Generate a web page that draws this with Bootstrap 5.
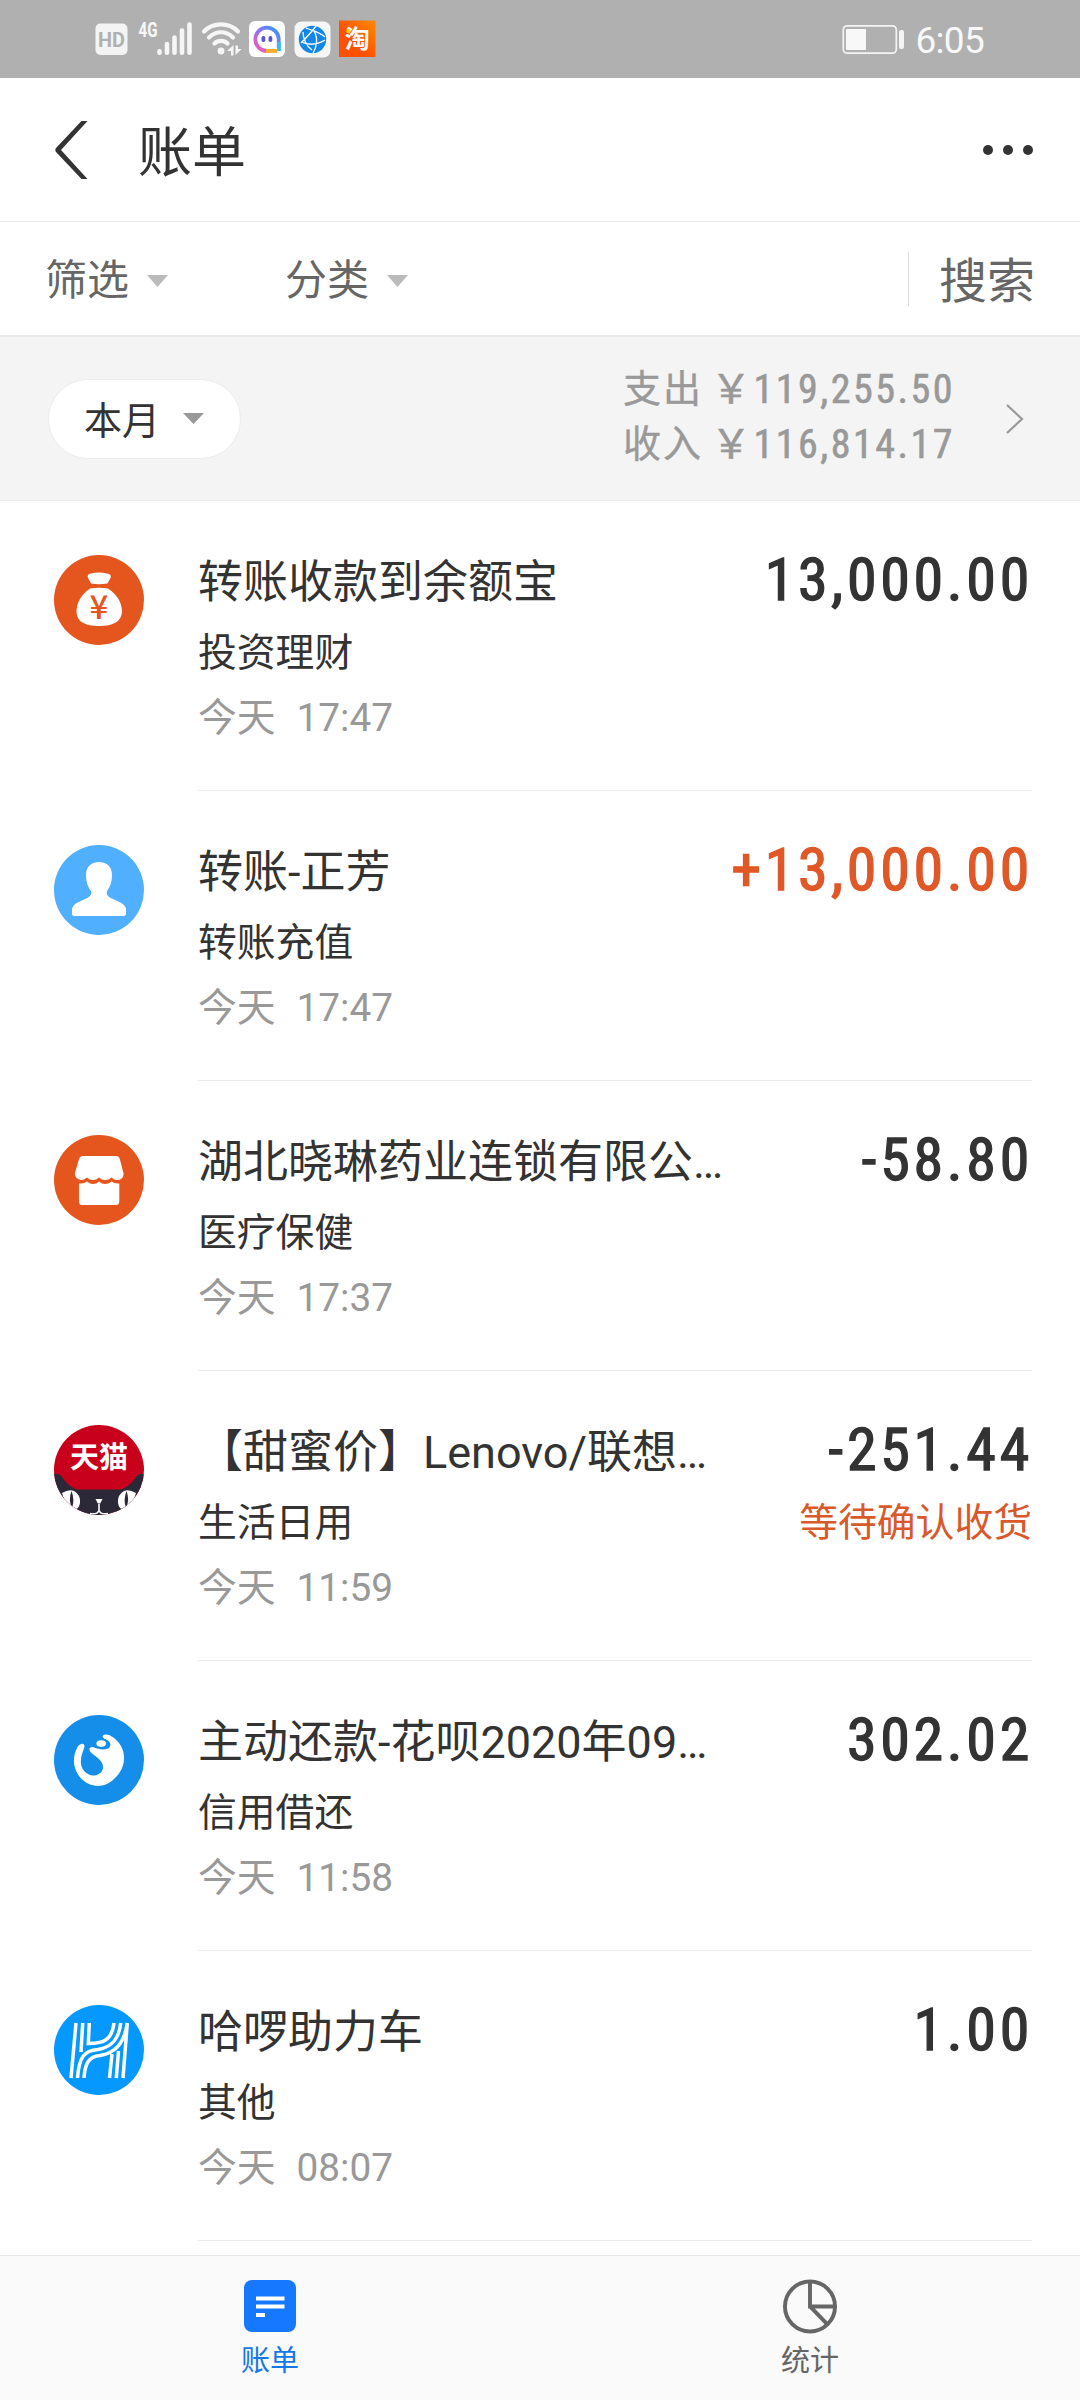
<!DOCTYPE html>
<html lang="zh-CN">
<head>
<meta charset="utf-8">
<meta name="viewport" content="width=device-width, initial-scale=1">
<title>账单</title>
<link href="https://cdn.jsdelivr.net/npm/bootstrap@5.3.0/dist/css/bootstrap.min.css" rel="stylesheet">
<style>
  body { width: 1080px; height: 2400px; overflow: hidden; background: #fff; color: #333; font-family: Roboto, "Noto Sans CJK SC", sans-serif; }
  svg { display: block; flex: none; }
  .statusbar { height: 78px; background: #b0b0b0; padding: 0 96px 0 95px; }
  .clock { font-size: 37px; line-height: 78px; color: #f8f8f8; letter-spacing: -.7px; margin-left: 11px; padding-top: 3px; }
  .titlebar { height: 144px; border-bottom: 1px solid #ebebeb; padding: 0 46px 0 53px; }
  .page-title { font-size: 54px; line-height: 60px; margin: 9px 0 0 49px; font-weight: 400; }
  .filterbar { height: 115px; border-bottom: 2px solid #eaeaea; padding: 0 45px 0 45px; color: #666; }
  .filter-item { font-size: 42px; line-height: 60px; width: 240px; padding-top: 5px; }
  .filter-item svg { margin: 0 0 1px 18px; }
  .search-link { font-size: 48px; line-height: 54px; border-left: 1px solid #ddd; padding-left: 30px; height: 54px; }
  .search-link span { display: block; padding-top: 3px; }
  .summary { height: 164px; background: #f4f4f4; border-bottom: 1px solid #ececec; padding: 0 56px 0 48px; }
  .month-pill { width: 193px; height: 80px; background: #fff; border: 1px solid #ececec; font-size: 38px; line-height: 78px; padding-left: 35px; }
  .month-pill span { padding-top: 4px; }
  .month-pill svg { margin-left: 23px; }
  .totals { color: #999; font-size: 38px; line-height: 55px; margin: -3px 51px 0 0; }
  .total-label { letter-spacing: 2px; width: 88px; -webkit-text-stroke: .4px; }
  .din { font-family: "Roboto Condensed", Roboto, "Noto Sans CJK SC", sans-serif; font-weight: 400; }
  .total-value { font-size: 40px; letter-spacing: 2.5px; -webkit-text-stroke: .6px; }
  .entry { height: 290px; padding: 54px 48px 0 54px; }
  .entry-body { margin-left: 54px; height: 236px; border-bottom: 1px solid #ebebeb; }
  .entry-title { font-size: 45px; line-height: 60px; margin-top: -2px; }
  .entry-kind { font-size: 38.8px; line-height: 60px; margin-top: 10px; }
  .entry-time { font-size: 38.8px; line-height: 60px; margin-top: 5px; color: #999; white-space: pre; word-spacing: .8px; }
  .amount { font-size: 60px; line-height: 60px; margin: -5px -1px 0 0; letter-spacing: 3.7px; -webkit-text-stroke: 1.3px; }
  .income { color: #e05827; }
  .pending { font-size: 38.8px; line-height: 60px; margin-top: 13px; color: #d9592b; }
  .tabs { height: 145px; margin-top: 14px; background: #fafafa; border-top: 1px solid #e8e8e8; padding-top: 23px; font-size: 29px; line-height: 40px; color: #666; }
  .tabs svg { margin-bottom: 8px; }
  .tabs .current { color: #1677e6; }
</style>
</head>
<body>
<div class="statusbar d-flex align-items-center">
  <svg width="282" height="78" viewBox="95 0 282 78">
    <rect x="95.5" y="23.500" width="32" height="31.500" rx="5" fill="#f4f4f4"/>
    <text x="111.500" y="46.500" font-size="20" font-weight="700" text-anchor="middle" fill="#b0b0b0" font-family="Roboto" textLength="27" lengthAdjust="spacingAndGlyphs">HD</text>
    <text x="138.500" y="37" font-size="20" font-weight="700" fill="#f8f8f8" font-family="Roboto" textLength="19" lengthAdjust="spacingAndGlyphs">4G</text>
    <g stroke="#f6f6f6" stroke-width="4.600" stroke-linecap="round"><path d="M159.500 51.300v1.400M167 44v8.700M174.500 37.500v15.200M182 30.500v22.200M189.500 24.500v28.200"/></g>
    <g fill="none" stroke="#f6f6f6" stroke-width="4.200" stroke-linecap="round"><path d="M204 31.500C213 22 229 22 238 31.500M209 37.500C216 30.500 226 30.500 233 37.500M214.500 43.500C218 40 224 40 227.500 43.500"/></g>
    <circle cx="221" cy="51" r="3.400" fill="#f6f6f6"/>
    <path fill="#f6f6f6" d="M227 51l6.500-6v10.500h-2.500v-4.500zM235.500 45.500v9.500l6-6h-3.500v-3.500z"/>
    <rect x="249" y="21" width="36" height="36" rx="6" fill="#fff"/>
    <defs>
      <linearGradient id="chat" x1="0" y1="1" x2="1" y2="0"><stop offset="0" stop-color="#ff5aa8"/><stop offset=".4" stop-color="#a46bf0"/><stop offset="1" stop-color="#2f9bf5"/></linearGradient>
      <linearGradient id="tb" x1="0" y1="1" x2="1" y2="0"><stop offset=".4" stop-color="#ff5000"/><stop offset="1" stop-color="#ff8a00"/></linearGradient>
    </defs>
    <path d="M267 51a11.700 11.700 0 1 1 11.700-12V48" fill="none" stroke="url(#chat)" stroke-width="3.800"/>
    <path d="M266 51h11" stroke="#ffab2e" stroke-width="3.800"/><path d="M279 42v9" stroke="#37bdf2" stroke-width="3.800"/>
    <rect x="261.500" y="36" width="3.800" height="6" rx="1.800" fill="#5b55d8"/><rect x="268.500" y="36" width="3.800" height="6" rx="1.800" fill="#5b55d8"/>
    <rect x="294.500" y="21.500" width="36" height="36" rx="7" fill="#f6f6f6"/>
    <circle cx="312.500" cy="39.500" r="13.700" fill="#1287e8"/>
    <path d="M306 28C310 30 320 32 325 37M301 43C305 39 311 33 316 26M301 42C308 45 317 45 325 40M314 31C318 37 317 47 313 53M303 32C303 38 306 46 312 50" fill="none" stroke="#fff" stroke-width="1.300"/>
    <rect x="339" y="20.500" width="36.500" height="36.500" fill="url(#tb)"/>
    <text x="357.300" y="48" font-size="25" font-weight="700" text-anchor="middle" fill="#fff" font-family="Noto Sans CJK SC">淘</text><circle cx="348.500" cy="31" r="2.200" fill="#ffd21e"/>
  </svg>
  <div class="ms-auto d-flex align-items-center">
    <svg width="62" height="78" viewBox="843 0 62 78"><rect x="844.300" y="25.800" width="53" height="27.400" rx="4" fill="none" stroke="#f4f4f4" stroke-width="1.700"/><rect x="847" y="29" width="20" height="21" rx="1" fill="#f8f8f8"/><rect x="900" y="30" width="5" height="19" rx="2" fill="#f4f4f4"/></svg>
    <span class="clock">6:05</span>
  </div>
</div>

<header class="titlebar d-flex align-items-center">
  <svg width="36" height="58" viewBox="0 0 36 58"><path d="M28.500 0h6L8 29l26.500 29h-6L3.500 31.500Q1 29 3.500 26.500z" fill="#333"/></svg>
  <h1 class="page-title">账单</h1>
  <svg class="ms-auto" width="52" height="12" viewBox="0 0 52 12" fill="#333"><circle cx="6" cy="6" r="5"/><circle cx="26" cy="6" r="5"/><circle cx="46" cy="6" r="5"/></svg>
</header>

<nav class="filterbar d-flex align-items-center">
  <div class="filter-item d-flex align-items-center">筛选<svg width="21" height="12"><path d="M0 0h21L10.500 12z" fill="#bbb"/></svg></div>
  <div class="filter-item d-flex align-items-center">分类<svg width="21" height="12"><path d="M0 0h21L10.500 12z" fill="#bbb"/></svg></div>
  <div class="search-link ms-auto"><span>搜索</span></div>
</nav>

<section class="summary d-flex align-items-center">
  <div class="month-pill rounded-pill d-flex align-items-center"><span>本月</span><svg width="21" height="11"><path d="M0 0h21L10.500 11z" fill="#999"/></svg></div>
  <div class="totals ms-auto">
    <div class="d-flex"><span class="total-label">支出</span><span class="din total-value">￥119,255.50</span></div>
    <div class="d-flex"><span class="total-label">收入</span><span class="din total-value">￥116,814.17</span></div>
  </div>
  <svg width="18" height="30" viewBox="0 0 18 30"><path d="M1 1l15 14L1 29" fill="none" stroke="#999" stroke-width="2.200"/></svg>
</section>

<main>
  <article class="entry d-flex">
    <svg width="90" height="90" viewBox="0 0 90 90"><circle cx="45" cy="45" r="45" fill="#e5561f"/><path fill="#fff" d="M37 18.500Q45 16.500 53 18.500Q58 19 56.500 23L53.500 28.500Q45 30 37 28.500L34 23Q32.500 19 37 18.500zM36 33.500Q45 32 54 33.500Q68 43 68 57Q67 71 45 71Q23 71 22.500 57Q22.500 43 36 33.500z"/><text x="45" y="63.500" text-anchor="middle" font-family="Noto Sans CJK SC" font-weight="500" font-size="33" fill="#e5561f">¥</text></svg>
    <div class="entry-body flex-grow-1 d-flex justify-content-between">
      <div><div class="entry-title">转账收款到余额宝</div><div class="entry-kind">投资理财</div><div class="entry-time">今天  17:47</div></div>
      <div class="text-end"><div class="amount din">13,000.00</div></div>
    </div>
  </article>
  <article class="entry d-flex">
    <svg width="90" height="90" viewBox="0 0 90 90"><circle cx="45" cy="45" r="45" fill="#50b0ff"/><path fill="#fff" d="M45 17C53 17 58 22 58 30C58 37 56 42 53 46C52 50 54 52 60 54.500C68 58 72 60 72 65V68.500Q72 71 69.500 71H20.500Q18 71 18 68.500V65C18 60 22 58 30 54.500C36 52 38 50 37 46C34 42 32 37 32 30C32 22 37 17 45 17z"/></svg>
    <div class="entry-body flex-grow-1 d-flex justify-content-between">
      <div><div class="entry-title">转账-正芳</div><div class="entry-kind">转账充值</div><div class="entry-time">今天  17:47</div></div>
      <div class="text-end"><div class="amount din income">+13,000.00</div></div>
    </div>
  </article>
  <article class="entry d-flex">
    <svg width="90" height="90" viewBox="0 0 90 90"><circle cx="45" cy="45" r="45" fill="#e5561f"/><path fill="#fff" d="M29 21H62Q65 21 65.800 24L69.700 39Q69 45 63 45Q60 45 57.500 42.500Q55 45 51 45Q47.500 45 45 42.500Q42.500 45 39 45Q35 45 33 42.500Q30 45 27 45Q21.500 44 20.700 39L25 24Q26 21 29 21zM25 48.500Q30 49 33 46.500Q36 49 39 49Q42.500 49 45 46.500Q48 49 51 49Q54.500 49 57.500 46.500Q61 49 65.300 48.500V66.500Q65 70 62 70H28Q25 70 25 66.500z"/></svg>
    <div class="entry-body flex-grow-1 d-flex justify-content-between">
      <div><div class="entry-title">湖北晓琳药业连锁有限公…</div><div class="entry-kind">医疗保健</div><div class="entry-time">今天  17:37</div></div>
      <div class="text-end"><div class="amount din">-58.80</div></div>
    </div>
  </article>
  <article class="entry d-flex">
    <svg width="90" height="90" viewBox="0 0 90 90"><defs><clipPath id="disc"><circle cx="45" cy="45" r="45"/></clipPath></defs><g clip-path="url(#disc)"><rect width="90" height="90" fill="#c9001b"/><path fill="#2b2938" d="M0 49Q5 48 8 52Q16 64 25 64.500H65Q74 64 82 52Q85 48 90 49V90H0z"/><path fill="#fff" d="M8 68Q15 64 20 66Q27 70 26 78Q25 85 19 85Q12 83 8 68zM82 68Q75 64 70 66Q63 70 64 78Q65 85 71 85Q78 83 82 68zM41.500 74h7l-2.300 4.500h-2.400z"/><path fill="#2b2938" d="M17.500 66Q21 75 18 83Q14 75 17.500 66zM72.500 66Q69 75 72 83Q76 75 72.500 66z"/><path fill="none" stroke="#fff" stroke-width="1.600" d="M36 88.500Q43 90 45 85.500Q47 90 54 88.500M45 79v6.500"/></g><text x="45" y="42.500" text-anchor="middle" font-family="Noto Sans CJK SC" font-weight="700" font-size="29" fill="#fff">天猫</text></svg>
    <div class="entry-body flex-grow-1 d-flex justify-content-between">
      <div><div class="entry-title">【甜蜜价】Lenovo/联想…</div><div class="entry-kind">生活日用</div><div class="entry-time">今天  11:59</div></div>
      <div class="text-end"><div class="amount din">-251.44</div><div class="pending">等待确认收货</div></div>
    </div>
  </article>
  <article class="entry d-flex">
    <svg width="90" height="90" viewBox="0 0 90 90"><circle cx="45" cy="45" r="45" fill="#148ee8"/><path fill="#fff" d="M30.500 31C30 27 25 29 23.500 32C18 42 19 53 25 61C33 72 49 75 60 64C70 55 73 42 67 31C63 24 56 19 51 19.500C47.500 20.500 48 23 52 24.500C58 27 57 32 54 33.500C49 35.500 44 34 40 32.500C36 31 34 34 36.500 37C40 41.500 49 44 49 52C49 58 43 61 38 60.500C30 59 26 52 27 45C27.500 38 30 35 30.500 31z"/><ellipse cx="47.200" cy="28.600" rx="4.800" ry="3.300" fill="#fff"/></svg>
    <div class="entry-body flex-grow-1 d-flex justify-content-between">
      <div><div class="entry-title">主动还款-花呗2020年09…</div><div class="entry-kind">信用借还</div><div class="entry-time">今天  11:58</div></div>
      <div class="text-end"><div class="amount din">302.02</div></div>
    </div>
  </article>
  <article class="entry d-flex">
    <svg width="90" height="90" viewBox="0 0 90 90"><circle cx="45" cy="45" r="45" fill="#0598ff"/><path fill="none" stroke="#fff" stroke-width="3.500" d="M22 18L17 73M28.700 18L27 47M35.300 18L34.300 38.500C48 38.500 58 36 60 18M23.500 73C25 52 30 45.500 44 44.500C58 42 65 34 66.700 18M30 73C31 58 35 51.500 46 50.500C60 48 70 40 73.300 18L69 73M58 49L55.500 73M64.500 46L62.300 73"/></svg>
    <div class="entry-body flex-grow-1 d-flex justify-content-between">
      <div><div class="entry-title">哈啰助力车</div><div class="entry-kind">其他</div><div class="entry-time">今天  08:07</div></div>
      <div class="text-end"><div class="amount din">1.00</div></div>
    </div>
  </article>
</main>

<footer class="tabs d-flex">
  <div class="current w-50 d-flex flex-column align-items-center"><svg width="54" height="54" viewBox="0 0 54 54"><rect x="1" y="1" width="52" height="52" rx="8" fill="#1677ff"/><path d="M13 19.500h28.500M13 27.500h28.500M13 36h9" stroke="#fff" stroke-width="4.200"/></svg>账单</div>
  <div class="w-50 d-flex flex-column align-items-center"><svg width="56" height="54" viewBox="0 -0.500 56 55" overflow="visible"><g fill="none" stroke="#666" stroke-width="4"><circle cx="28" cy="27.500" r="25.500"/><path d="M28 2v25.500h25.500M28 27.500l17.500 18"/></g></svg>统计</div>
</footer>
<script src="https://cdn.jsdelivr.net/npm/bootstrap@5.3.0/dist/js/bootstrap.bundle.min.js"></script>
</body>
</html>
